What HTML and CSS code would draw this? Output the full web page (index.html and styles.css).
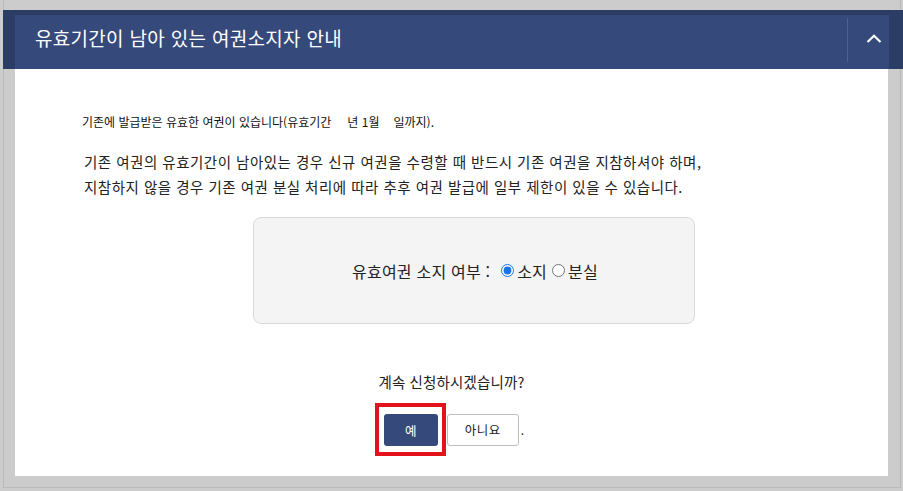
FILE: index.html
```html
<!DOCTYPE html>
<html lang="ko">
<head>
<meta charset="utf-8">
<title>유효기간이 남아 있는 여권소지자 안내</title>
<link rel="stylesheet" href="styles.css">
</head>
<body>
<div class="frame">
  <div class="header">
    <div class="header-inner">
      <h1 class="title">유효기간이 남아 있는 여권소지자 안내</h1>
      <button class="toggle" type="button" aria-label="접기">
        <svg width="16" height="9" viewBox="0 0 16 9"><polyline points="1.5,8 8,1.8 14.5,8" fill="none" stroke="#ffffff" stroke-width="2.2"/></svg>
      </button>
    </div>
  </div>
  <div class="content">
    <p class="notice">기존에 발급받은 유효한 여권이 있습니다(유효기간<span class="gap1"></span>년 1월<span class="gap2"></span>일까지).</p>
    <p class="desc">기존 여권의 유효기간이 남아있는 경우 신규 여권을 수령할 때 반드시 기존 여권을 지참하셔야 하며,<br>지참하지 않을 경우 기존 여권 분실 처리에 따라 추후 여권 발급에 일부 제한이 있을 수 있습니다.</p>
    <div class="choice-box">
      <span class="choice-label">유효여권 소지 여부 :</span>
      <label class="opt"><input type="radio" name="own" checked>소지</label>
      <label class="opt"><input type="radio" name="own">분실</label>
    </div>
    <p class="question">계속 신청하시겠습니까?</p>
    <div class="actions">
      <span class="highlight"><button class="btn btn-yes" type="button">예</button></span>
      <button class="btn btn-no" type="button">아니요</button><span class="dot">.</span>
    </div>
  </div>
</div>
</body>
</html>
```
FILE: styles.css
```css
html, body {
  margin: 0;
  padding: 0;
  width: 903px;
  height: 491px;
  overflow: hidden;
  background: #cccccc;
  font-family: "Noto Sans CJK KR", "Malgun Gothic", "Noto Sans", sans-serif;
  color: #222222;
}

.frame {
  margin-left: 3px;
  width: 898px;
  height: 488px;
  box-sizing: border-box;
  border-left: 1px solid #b9b9b9;
  border-right: 1px solid #b9b9b9;
  border-bottom: 1px solid #b9b9b9;
  padding-top: 10px;
}

.header {
  margin-left: -1px;
  margin-right: -4px;
  height: 59px;
  box-sizing: border-box;
  background: #2b3d64;
  padding: 5px 15px 0 12px;
}

.header-inner {
  height: 54px;
  background: #354a7a;
  display: flex;
  align-items: flex-start;
  justify-content: space-between;
}

.title {
  margin: 0;
  padding: 10px 0 0 20px;
  font-size: 19px;
  line-height: 26px;
  font-weight: normal;
  letter-spacing: 0.3px;
  color: #ffffff;
}

.toggle {
  margin: 3px 0 0 0;
  width: 42px;
  height: 44px;
  padding: 16px 0 0 18px;
  box-sizing: border-box;
  border: 0;
  border-left: 1px solid rgba(255, 255, 255, 0.13);
  background: transparent;
  display: flex;
  align-items: flex-start;
}

.content {
  margin: 0 12px 0 11px;
  height: 407px;
  box-sizing: border-box;
  background: #ffffff;
  padding: 45px 0 0 67px;
}

.notice {
  margin: 0;
  font-size: 12px;
  line-height: 16px;
  color: #111111;
}

.gap1 {
  display: inline-block;
  width: 16px;
}

.gap2 {
  display: inline-block;
  width: 14px;
}

.desc {
  margin: 19px 0 0 2px;
  font-size: 14.5px;
  line-height: 25px;
  letter-spacing: 0.5px;
  color: #222222;
}

.choice-box {
  margin: 18px 0 0 171px;
  width: 442px;
  height: 107px;
  box-sizing: border-box;
  background: #f4f4f4;
  border: 1px solid #d9d9d9;
  border-radius: 8px;
  display: flex;
  align-items: center;
  justify-content: center;
  padding-left: 2px;
  font-size: 16px;
  color: #222222;
}

.choice-label {
  letter-spacing: 0.2px;
  margin-right: 11px;
}

.opt {
  display: inline-flex;
  align-items: center;
  letter-spacing: 0.2px;
}

.opt input {
  width: 13px;
  height: 13px;
  margin: 0 3px 0 0;
  accent-color: #1a73e8;
}

.opt + .opt {
  margin-left: 5px;
}

.question {
  margin: 48px 0 0 -67px;
  text-align: center;
  font-size: 14.5px;
  line-height: 20px;
  letter-spacing: 0.15px;
  color: #222222;
}

.actions {
  margin: 11px 0 0 -67px;
  display: flex;
  align-items: center;
  justify-content: center;
  padding-right: 4px;
}

.highlight {
  display: inline-flex;
  border: 4px solid #e3131b;
  padding: 7px 4px 6px 5px;
}

.btn {
  height: 32px;
  box-sizing: border-box;
  border-radius: 3px;
  font-family: inherit;
  font-size: 12.5px;
  cursor: pointer;
}

.btn-yes {
  width: 54px;
  border: 0;
  background: #354a7a;
  color: #ffffff;
}

.btn-no {
  width: 72px;
  margin-left: 1px;
  border: 1px solid #bdbdbd;
  background: #ffffff;
  color: #222222;
  letter-spacing: 0.5px;
}

.dot {
  font-size: 12px;
  margin-left: 2px;
  align-self: center;
  color: #222222;
}
```
